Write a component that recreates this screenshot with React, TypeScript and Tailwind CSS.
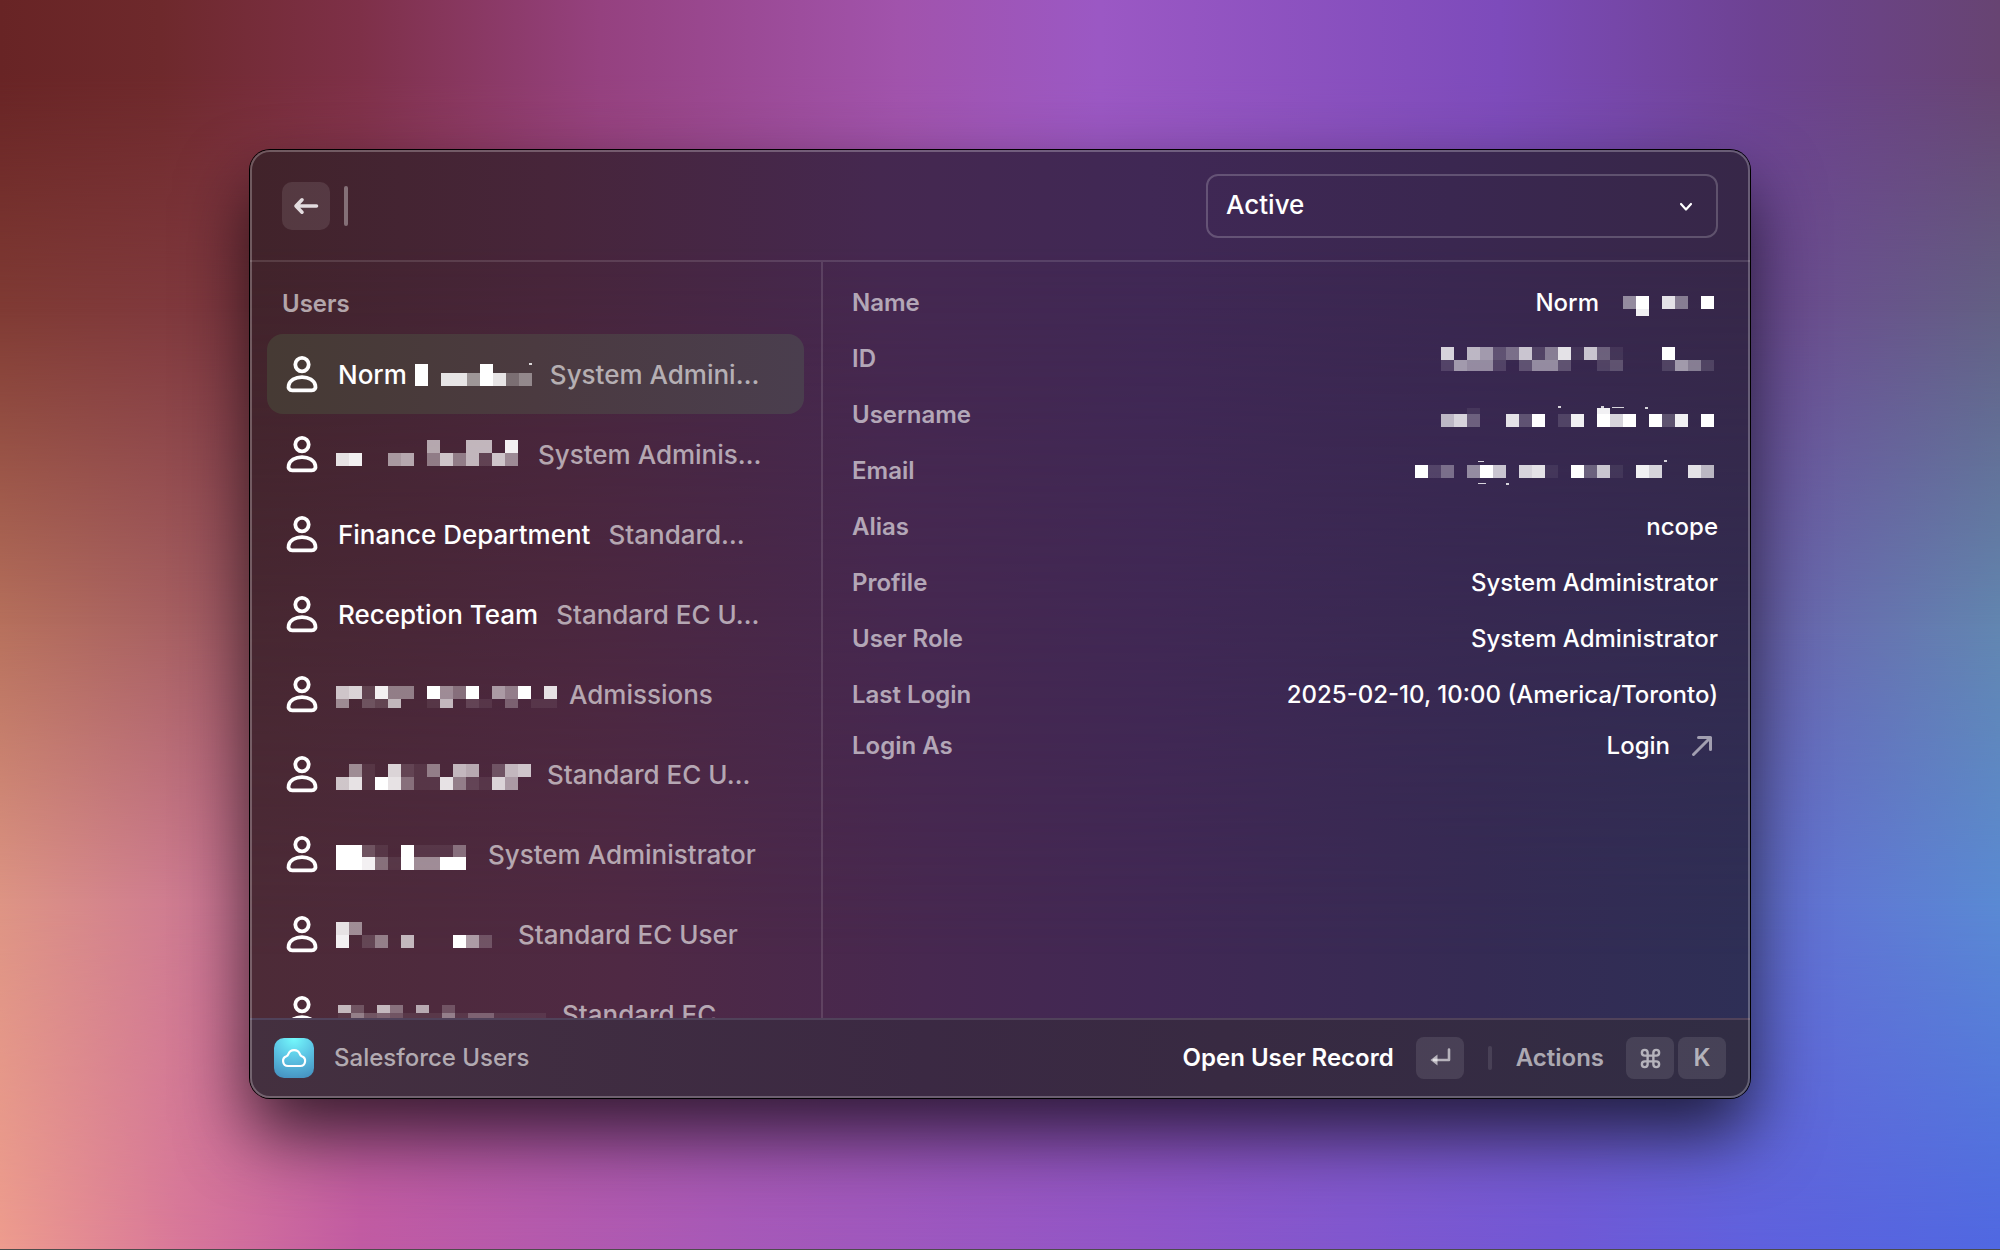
import React from "react";

type Speck = [x: number, y: number, width: number];

interface MosaicProps {
  /** Each band is a height followed by one hex digit of whiteness per cell. */
  bands: [height: number, cells: string][];
  specks?: Speck[];
  className?: string;
}

const CELL = 13;

function Mosaic({ bands, specks = [], className = "" }: MosaicProps) {
  const columns = Math.max(...bands.map(([, cells]) => cells.length));
  const height = bands.reduce((sum, [h]) => sum + h, 0);
  let top = 0;
  return (
    <svg
      role="img"
      aria-label="Redacted"
      width={columns * CELL}
      height={height}
      shapeRendering="crispEdges"
      className={`shrink-0 overflow-visible ${className}`}
    >
      {bands.map(([h, cells], band) => {
        const y = top;
        top += h;
        return cells
          .split("")
          .map((digit, i) =>
            digit === "0" ? null : (
              <rect
                key={`${band}-${i}`}
                x={i * CELL}
                y={y}
                width={CELL}
                height={h}
                fill="#fff"
                fillOpacity={parseInt(digit, 16) / 15}
              />
            ),
          );
      })}
      {specks.map(([x, y, w]) => (
        <rect key={`${x}-${y}`} x={x} y={y} width={w} height={w > 4 ? 1 : 2} fill="#fff" fillOpacity={0.8} />
      ))}
    </svg>
  );
}

function UserIcon() {
  return (
    <svg width="32" height="38" viewBox="0 0 32 38" fill="none" stroke="#fff" strokeWidth="3.8" strokeLinejoin="round" aria-hidden="true" className="shrink-0">
      <circle cx="16" cy="9.6" r="6.7" />
      <path d="M16 22.200c-7 0-12 3.400-13.300 8-.8 3 .7 5.100 3.600 5.100h19.400c2.900 0 4.400-2.100 3.600-5.100C28 25.600 23 22.200 16 22.200Z" />
    </svg>
  );
}

interface User {
  name?: string;
  mosaic?: React.ReactNode;
  role: string;
  gap: string;
}

const users: User[] = [
  {
    name: "Norm",
    mosaic: (
      <Mosaic
        className="ml-2"
        bands={[
          [9, "f0000f000"],
          [13, "f0dd7fd46"],
        ]}
        specks={[[114, -1, 3]]}
      />
    ),
    role: "System Admini…",
    gap: "ml-[18px]",
  },
  {
    mosaic: (
      <Mosaic
        className="-mt-1 -ml-0.5"
        bands={[
          [13, "0000000900aa0e"],
          [13, "de008906b6a2b7"],
        ]}
      />
    ),
    role: "System Adminis…",
    gap: "ml-5",
  },
  { name: "Finance Department", role: "Standard…", gap: "ml-[18px]" },
  { name: "Reception Team", role: "Standard EC U…", gap: "ml-[18px]" },
  {
    mosaic: (
      <Mosaic
        className="mt-1 -ml-0.5"
        bands={[
          [13, "bc2e660f75f086f0d"],
          [9, "7032a001a02104011"],
        ]}
      />
    ),
    role: "Admissions",
    gap: "ml-3",
  },
  {
    mosaic: (
      <Mosaic
        className="mt-1 -ml-0.5"
        bands={[
          [13, "0710c2160a903ab"],
          [13, "bd1fd511d621c80"],
        ]}
      />
    ),
    role: "Standard EC U…",
    gap: "ml-4",
  },
  {
    mosaic: (
      <Mosaic
        className="mt-1 -ml-0.5"
        bands={[
          [12, "ff310f1115"],
          [13, "ffe51f77ff"],
        ]}
      />
    ),
    role: "System Administrator",
    gap: "ml-[22px]",
  },
  {
    mosaic: (
      <Mosaic
        className="-ml-0.5"
        bands={[
          [13, "d70000000000"],
          [13, "e0260a000f83"],
        ]}
      />
    ),
    role: "Standard EC User",
    gap: "ml-[26px]",
  },
  {
    mosaic: (
      <Mosaic
        bands={[
          [8, "a30a509030000000"],
          [13, "1634311161441111"],
        ]}
        specks={[[0, 14, 3]]}
      />
    ),
    role: "Standard EC",
    gap: "ml-4",
  },
];

const details: { label: string; value: React.ReactNode }[] = [
  {
    label: "Name",
    value: (
      <>
        Norm
        <Mosaic
          className="mr-1 mt-1.5 ml-6"
          bands={[
            [13, "7f0d60f"],
            [7, "0e"],
          ]}
        />
      </>
    ),
  },
  {
    label: "ID",
    value: (
      <Mosaic
        className="mr-1"
        bands={[
          [13, "c0a835b26d1b41000f000"],
          [11, "287720377300230002862"],
        ]}
      />
    ),
  },
  {
    label: "Username",
    value: (
      <Mosaic
        className="mr-1 mt-1"
        bands={[
          [6, "001000000000e"],
          [13, "ac400d3f02e0fcf0f3e0f"],
        ]}
        specks={[
          [117, -2, 3],
          [160, -2, 3],
          [171, -1, 12],
          [204, -1, 3],
        ]}
      />
    ),
  },
  {
    label: "Email",
    value: (
      <Mosaic
        className="mr-1"
        bands={[[13, "f2507fb0cd10f4b10ec00da"]]}
        specks={[
          [63, -4, 6],
          [249, -5, 3],
          [63, 18, 8],
          [91, 18, 3],
        ]}
      />
    ),
  },
  { label: "Alias", value: "ncope" },
  { label: "Profile", value: "System Administrator" },
  { label: "User Role", value: "System Administrator" },
  { label: "Last Login", value: "2025-02-10, 10:00 (America/Toronto)" },
];

/** Five horizontal colour bands, each fading into the one below it. */
function Wallpaper() {
  return (
    <div aria-hidden="true" className="absolute inset-0 -z-10 border-b border-black/70">
      <div className="absolute inset-0 bg-[linear-gradient(to_right,#ee9c8e_0%,#d9789a_9%,#c25ba3_18%,#a859b8_36%,#9156c8_57%,#7158d6_78%,#5f61de_88%,#5068e2_100%)]" />
      <div className="absolute inset-0 bg-[linear-gradient(to_right,#dd9484_0%,#cc7892_10%,#b35a98_22%,#8d55c0_60%,#6272d2_90%,#5a8ad3_100%)] [mask-image:linear-gradient(to_bottom,#000_72%,transparent_100%)]" />
      <div className="absolute inset-0 bg-[linear-gradient(to_right,#b6705c_0%,#a65f62_9%,#a04e80_22%,#8d55c0_60%,#6a62ae_88%,#6286b0_100%)] [mask-image:linear-gradient(to_bottom,#000_50%,transparent_72%)]" />
      <div className="absolute inset-0 bg-[linear-gradient(to_right,#803b34_0%,#80393f_10%,#97406a_24%,#9d57b8_50%,#764cb0_80%,#6b4e90_90%,#636084_100%)] [mask-image:linear-gradient(to_bottom,#000_25%,transparent_50%)]" />
      <div className="absolute inset-0 bg-[linear-gradient(to_right,#682425_0%,#6e292c_8%,#7e3048_18%,#95417f_30%,#a153ac_45%,#9b58c4_55%,#7d4bbb_75%,#6d4292_88%,#674472_100%)] [mask-image:linear-gradient(to_bottom,#000_6%,transparent_25%)]" />
    </div>
  );
}

function KeyCap({ children }: { children: React.ReactNode }) {
  return (
    <kbd className="flex h-[42px] w-12 items-center justify-center rounded-lg bg-white/10 text-2xl font-semibold text-white/60 [font-family:Inter,sans-serif]">
      {children}
    </kbd>
  );
}

export default function App() {
  return (
    <div className="relative isolate flex h-screen overflow-hidden px-[12.5%] pt-[150px] pb-[152px] text-white [font-family:Inter,sans-serif]">
      <Wallpaper />
      <main className="relative isolate flex min-w-0 flex-1 flex-col overflow-hidden rounded-[20px] bg-[linear-gradient(to_right,#4d2b37_0%,#4f2944_25%,#472850_45%,#412854_60%,#352b54_82%,#2e2f56_100%)] shadow-[0_0_0_1px_#000,0_36px_70px_rgba(0,0,0,0.7)]">
        <div
          aria-hidden="true"
          className="absolute inset-0 -z-10 bg-[linear-gradient(to_right,#41232a_0%,#47253a_20%,#452850_42%,#402855_60%,#3a2750_80%,#372748_100%)] [mask-image:linear-gradient(to_bottom,#000_10%,transparent_85%)]"
        />

        <header className="flex h-28 shrink-0 items-center border-b-2 border-white/12 px-8 pt-0.5">
          <button type="button" aria-label="Back" className="flex size-12 shrink-0 items-center justify-center rounded-[10px] bg-white/10">
            <svg width="26" height="20" viewBox="0 0 26 20" fill="none" stroke="#e3dcdf" strokeWidth="3.600" strokeLinecap="round" strokeLinejoin="round" aria-hidden="true">
              <path d="M23.500 10H4M9 3.800 3 10l6 6.200" />
            </svg>
          </button>
          <span aria-hidden="true" className="ml-3.5 h-10 w-1 rounded-full bg-white/35" />
          <input type="text" aria-label="Search users" className="min-w-0 flex-1 bg-transparent px-2 text-[26px] outline-none" />
          <div className="relative w-lg shrink-0">
            <select
              aria-label="User status"
              defaultValue="Active"
              className="h-16 w-full appearance-none rounded-xl border-2 border-white/20 bg-transparent px-[18px] pb-0.5 text-[26px] leading-8 font-medium text-white outline-none"
            >
              <option>Active</option>
            </select>
            <svg width="14" height="10" viewBox="0 0 14 10" fill="none" stroke="#fff" strokeWidth="2.200" strokeLinecap="round" strokeLinejoin="round" aria-hidden="true" className="pointer-events-none absolute top-7 right-[25px]">
              <path d="m2 2 5 5.500L12 2" />
            </svg>
          </div>
        </header>

        <div className="flex min-h-0 flex-1">
          <section className="flex w-[38.2%] flex-col overflow-hidden border-r-2 border-white/12 px-[17px]">
            <h2 className="shrink-0 pt-[26px] pb-3.5 pl-[15px] text-2xl leading-8 font-semibold text-white/60">Users</h2>
            <ul>
              {users.map((user, i) => (
                <li key={i}>
                  <button
                    type="button"
                    className={`flex h-20 w-full items-center rounded-2xl pl-[19px] text-left text-[26px] leading-8 font-medium whitespace-nowrap ${
                      i === 0 ? "bg-[linear-gradient(to_right,#463a34,#4b3a40_50%,#4a3e4e)]" : ""
                    }`}
                  >
                    <UserIcon />
                    <span className="ml-5 flex items-center pt-0.5">
                      {user.name}
                      {user.mosaic}
                    </span>
                    <span className={`${user.gap} pt-0.5 text-white/60`}>{user.role}</span>
                  </button>
                </li>
              ))}
            </ul>
          </section>

          <dl className="min-w-0 flex-1 pt-[13px] pr-8 pl-[29px] text-2xl leading-8">
            {details.map(({ label, value }) => (
              <div key={label} className="flex h-14 items-center justify-between">
                <dt className="font-semibold text-white/60">{label}</dt>
                <dd className="flex items-center font-medium">{value}</dd>
              </div>
            ))}
            <div className="flex h-[46px] items-center justify-between">
              <dt className="font-semibold text-white/60">Login As</dt>
              <dd className="font-medium">
                <a href="#login" className="flex items-center">
                  Login
                  <svg width="24" height="24" viewBox="0 0 24 24" fill="none" stroke="#fff" strokeOpacity="0.55" strokeWidth="3" strokeLinecap="round" strokeLinejoin="round" aria-hidden="true" className="mr-1 ml-5">
                    <path d="M3.500 20.500 20.500 3.500M8.500 3.500h12v12" />
                  </svg>
                </a>
              </dd>
            </div>
          </dl>
        </div>

        <footer className="flex h-20 shrink-0 items-center border-t-2 border-[#50425a] bg-[linear-gradient(to_right,#44303f,#3b2943_45%,#382a42_65%,#312d44)] px-6 pb-0.5">
          <svg width="40" height="40" viewBox="0 0 40 40" aria-hidden="true">
            <defs>
              <radialGradient id="cloud-badge" cx="0.5" cy="0" r="1.050">
                <stop offset="0" stopColor="#74fbfd" />
                <stop offset="0.5" stopColor="#5cc4e4" />
                <stop offset="1" stopColor="#4591c0" />
              </radialGradient>
            </defs>
            <rect width="40" height="40" rx="10" fill="url(#cloud-badge)" />
            <path
              d="M14 28a5 5 0 0 1-1.600-9.700c1.200-.5 1.500-1 1.900-2.200a6.200 6.200 0 0 1 11.600 0c.4 1.200.7 1.700 1.900 2.200A5 5 0 0 1 26.200 28Z"
              fill="none"
              stroke="#fff"
              strokeWidth="2.200"
              strokeLinejoin="round"
            />
          </svg>
          <span className="ml-5 flex-1 text-2xl font-medium text-white/60">Salesforce Users</span>
          <button type="button" className="flex items-center text-2xl font-semibold">
            Open User Record
            <span className="ml-[22px]">
              <KeyCap>
                <svg width="22" height="20" viewBox="0 0 22 20" fill="none" stroke="currentColor" strokeWidth="2.600" aria-hidden="true">
                  <path d="M20 1.500v10.500H5" strokeLinecap="round" strokeLinejoin="round" />
                  <path d="M8.500 6.500v11L1.500 12Z" fill="currentColor" stroke="none" />
                </svg>
              </KeyCap>
            </span>
          </button>
          <span aria-hidden="true" className="mx-6 h-6 w-1 rounded-full bg-white/10" />
          <button type="button" className="flex items-center gap-1 text-2xl font-semibold text-white/60">
            <span className="mr-[18px]">Actions</span>
            <KeyCap>
              <svg width="23" height="23" viewBox="0 0 24 24" fill="none" stroke="currentColor" strokeWidth="2.500" aria-hidden="true">
                <path d="M15 6v12a3 3 0 1 0 3-3H6a3 3 0 1 0 3 3V6a3 3 0 1 0-3 3h12a3 3 0 1 0-3-3" />
              </svg>
            </KeyCap>
            <KeyCap>K</KeyCap>
          </button>
        </footer>
        <div aria-hidden="true" className="pointer-events-none absolute inset-0 rounded-[20px] border-2 border-white/25" />
      </main>
    </div>
  );
}
